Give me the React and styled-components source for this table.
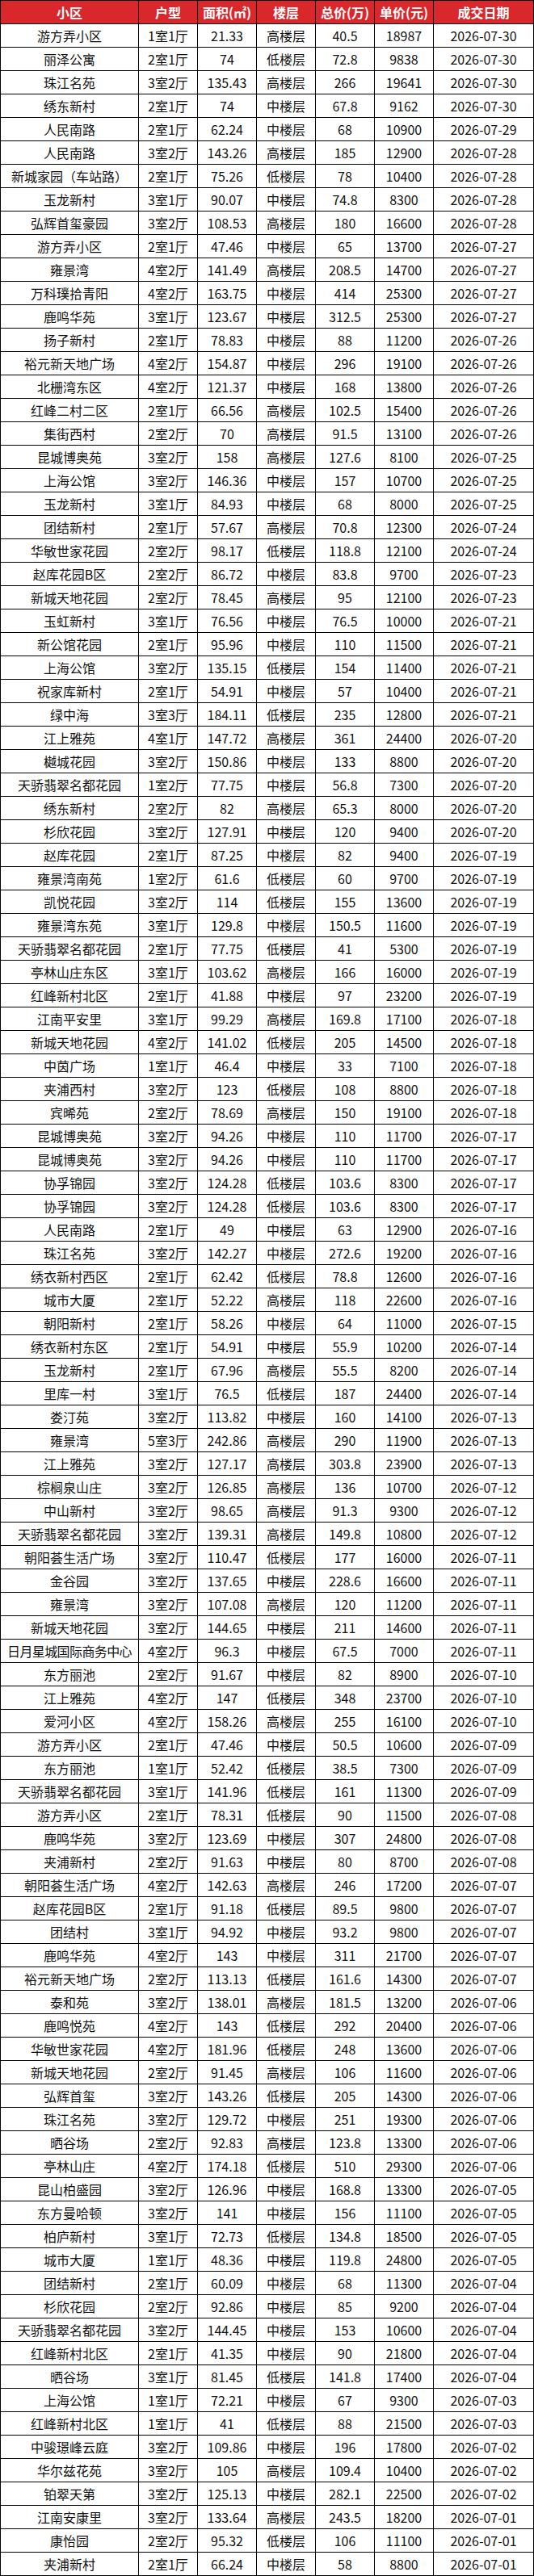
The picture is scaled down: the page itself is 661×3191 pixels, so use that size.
import React from 'react';
import styled, { createGlobalStyle } from 'styled-components';

const GlobalStyle = createGlobalStyle`
  html, body {
    margin: 0;
    padding: 0;
    background: #fff;
  }
  body {
    font-family: "Noto Sans CJK SC", "Noto Sans", "Liberation Sans", sans-serif;
  }
`;

const Table = styled.div`
  width: 661px;
  display: grid;
  grid-template-columns: 171px 73px 73px 73px 73px 73px 124px;
  grid-auto-rows: 29px;
  border-top: 1px solid #000;
  border-left: 1px solid #000;
  box-sizing: border-box;
`;

const HeadCell = styled.div`
  display: flex;
  align-items: center;
  justify-content: center;
  box-sizing: border-box;
  border-right: 1px solid #000;
  border-bottom: 1px solid #000;
  background: #d9272b;
  color: #fff;
  font-size: 16px;
  font-weight: 700;
  white-space: nowrap;
  overflow: hidden;
`;

const Cell = styled.div`
  display: flex;
  align-items: center;
  justify-content: center;
  box-sizing: border-box;
  border-right: 1px solid #000;
  border-bottom: 1px solid #000;
  color: #111;
  font-size: 16px;
  white-space: nowrap;
  overflow: hidden;
  letter-spacing: ${({ $tight }) => ($tight ? '-0.6px' : '0')};
`;

const columns = ['小区', '户型', '面积(㎡)', '楼层', '总价(万)', '单价(元)', '成交日期'];

const raw = `游方弄小区|1室1厅|21.33|高楼层|40.5|18987|2026-07-30
丽泽公寓|2室1厅|74|低楼层|72.8|9838|2026-07-30
珠江名苑|3室2厅|135.43|高楼层|266|19641|2026-07-30
绣东新村|2室1厅|74|中楼层|67.8|9162|2026-07-30
人民南路|2室1厅|62.24|中楼层|68|10900|2026-07-29
人民南路|3室2厅|143.26|高楼层|185|12900|2026-07-28
新城家园（车站路）|2室1厅|75.26|低楼层|78|10400|2026-07-28
玉龙新村|3室1厅|90.07|中楼层|74.8|8300|2026-07-28
弘辉首玺豪园|3室2厅|108.53|高楼层|180|16600|2026-07-28
游方弄小区|2室1厅|47.46|中楼层|65|13700|2026-07-27
雍景湾|4室2厅|141.49|高楼层|208.5|14700|2026-07-27
万科璞拾青阳|4室2厅|163.75|中楼层|414|25300|2026-07-27
鹿鸣华苑|3室1厅|123.67|中楼层|312.5|25300|2026-07-27
扬子新村|2室1厅|78.83|中楼层|88|11200|2026-07-26
裕元新天地广场|4室2厅|154.87|中楼层|296|19100|2026-07-26
北栅湾东区|4室2厅|121.37|中楼层|168|13800|2026-07-26
红峰二村二区|2室1厅|66.56|高楼层|102.5|15400|2026-07-26
集街西村|2室2厅|70|高楼层|91.5|13100|2026-07-26
昆城博奥苑|3室2厅|158|高楼层|127.6|8100|2026-07-25
上海公馆|3室2厅|146.36|中楼层|157|10700|2026-07-25
玉龙新村|3室1厅|84.93|中楼层|68|8000|2026-07-25
团结新村|2室1厅|57.67|高楼层|70.8|12300|2026-07-24
华敏世家花园|2室2厅|98.17|低楼层|118.8|12100|2026-07-24
赵库花园B区|2室2厅|86.72|中楼层|83.8|9700|2026-07-23
新城天地花园|2室2厅|78.45|高楼层|95|12100|2026-07-23
玉虹新村|3室1厅|76.56|中楼层|76.5|10000|2026-07-21
新公馆花园|2室1厅|95.96|中楼层|110|11500|2026-07-21
上海公馆|3室2厅|135.15|低楼层|154|11400|2026-07-21
祝家库新村|2室1厅|54.91|中楼层|57|10400|2026-07-21
绿中海|3室3厅|184.11|低楼层|235|12800|2026-07-21
江上雅苑|4室1厅|147.72|高楼层|361|24400|2026-07-20
樾城花园|3室2厅|150.86|中楼层|133|8800|2026-07-20
天骄翡翠名都花园|1室2厅|77.75|中楼层|56.8|7300|2026-07-20
绣东新村|2室2厅|82|高楼层|65.3|8000|2026-07-20
杉欣花园|3室2厅|127.91|中楼层|120|9400|2026-07-20
赵库花园|2室1厅|87.25|中楼层|82|9400|2026-07-19
雍景湾南苑|1室2厅|61.6|低楼层|60|9700|2026-07-19
凯悦花园|3室2厅|114|低楼层|155|13600|2026-07-19
雍景湾东苑|3室1厅|129.8|中楼层|150.5|11600|2026-07-19
天骄翡翠名都花园|2室1厅|77.75|低楼层|41|5300|2026-07-19
亭林山庄东区|3室1厅|103.62|高楼层|166|16000|2026-07-19
红峰新村北区|2室1厅|41.88|中楼层|97|23200|2026-07-19
江南平安里|3室1厅|99.29|高楼层|169.8|17100|2026-07-18
新城天地花园|4室2厅|141.02|低楼层|205|14500|2026-07-18
中茵广场|1室1厅|46.4|中楼层|33|7100|2026-07-18
夹浦西村|3室2厅|123|低楼层|108|8800|2026-07-18
宾晞苑|2室2厅|78.69|高楼层|150|19100|2026-07-18
昆城博奥苑|3室2厅|94.26|中楼层|110|11700|2026-07-17
昆城博奥苑|3室2厅|94.26|中楼层|110|11700|2026-07-17
协孚锦园|3室2厅|124.28|低楼层|103.6|8300|2026-07-17
协孚锦园|3室2厅|124.28|低楼层|103.6|8300|2026-07-17
人民南路|2室1厅|49|中楼层|63|12900|2026-07-16
珠江名苑|3室2厅|142.27|中楼层|272.6|19200|2026-07-16
绣衣新村西区|2室1厅|62.42|低楼层|78.8|12600|2026-07-16
城市大厦|2室1厅|52.22|高楼层|118|22600|2026-07-16
朝阳新村|2室1厅|58.26|中楼层|64|11000|2026-07-15
绣衣新村东区|2室1厅|54.91|中楼层|55.9|10200|2026-07-14
玉龙新村|2室1厅|67.96|高楼层|55.5|8200|2026-07-14
里库一村|3室1厅|76.5|低楼层|187|24400|2026-07-14
娄汀苑|3室2厅|113.82|中楼层|160|14100|2026-07-13
雍景湾|5室3厅|242.86|高楼层|290|11900|2026-07-13
江上雅苑|3室2厅|127.17|高楼层|303.8|23900|2026-07-13
棕榈泉山庄|3室2厅|126.85|高楼层|136|10700|2026-07-12
中山新村|3室2厅|98.65|高楼层|91.3|9300|2026-07-12
天骄翡翠名都花园|3室2厅|139.31|高楼层|149.8|10800|2026-07-12
朝阳荟生活广场|3室2厅|110.47|低楼层|177|16000|2026-07-11
金谷园|3室2厅|137.65|中楼层|228.6|16600|2026-07-11
雍景湾|3室2厅|107.08|高楼层|120|11200|2026-07-11
新城天地花园|3室2厅|144.65|中楼层|211|14600|2026-07-11
日月星城国际商务中心|4室2厅|96.3|中楼层|67.5|7000|2026-07-11
东方丽池|2室2厅|91.67|中楼层|82|8900|2026-07-10
江上雅苑|4室2厅|147|低楼层|348|23700|2026-07-10
爱河小区|4室2厅|158.26|高楼层|255|16100|2026-07-10
游方弄小区|2室1厅|47.46|中楼层|50.5|10600|2026-07-09
东方丽池|1室1厅|52.42|低楼层|38.5|7300|2026-07-09
天骄翡翠名都花园|3室1厅|141.96|低楼层|161|11300|2026-07-09
游方弄小区|2室1厅|78.31|低楼层|90|11500|2026-07-08
鹿鸣华苑|3室2厅|123.69|中楼层|307|24800|2026-07-08
夹浦新村|2室2厅|91.63|中楼层|80|8700|2026-07-08
朝阳荟生活广场|4室2厅|142.63|高楼层|246|17200|2026-07-07
赵库花园B区|2室1厅|91.18|低楼层|89.5|9800|2026-07-07
团结村|3室1厅|94.92|中楼层|93.2|9800|2026-07-07
鹿鸣华苑|4室2厅|143|中楼层|311|21700|2026-07-07
裕元新天地广场|2室2厅|113.13|低楼层|161.6|14300|2026-07-07
泰和苑|3室2厅|138.01|高楼层|181.5|13200|2026-07-06
鹿鸣悦苑|4室2厅|143|低楼层|292|20400|2026-07-06
华敏世家花园|4室2厅|181.96|低楼层|248|13600|2026-07-06
新城天地花园|2室2厅|91.45|高楼层|106|11600|2026-07-06
弘辉首玺|3室2厅|143.26|低楼层|205|14300|2026-07-06
珠江名苑|3室2厅|129.72|中楼层|251|19300|2026-07-06
晒谷场|2室2厅|92.83|高楼层|123.8|13300|2026-07-06
亭林山庄|4室2厅|174.18|低楼层|510|29300|2026-07-06
昆山柏盛园|3室2厅|126.96|中楼层|168.8|13300|2026-07-05
东方曼哈顿|3室2厅|141|中楼层|156|11100|2026-07-05
柏庐新村|3室1厅|72.73|低楼层|134.8|18500|2026-07-05
城市大厦|1室1厅|48.36|中楼层|119.8|24800|2026-07-05
团结新村|2室1厅|60.09|中楼层|68|11300|2026-07-04
杉欣花园|2室2厅|92.86|中楼层|85|9200|2026-07-04
天骄翡翠名都花园|3室2厅|144.45|中楼层|153|10600|2026-07-04
红峰新村北区|2室1厅|41.35|中楼层|90|21800|2026-07-04
晒谷场|3室1厅|81.45|低楼层|141.8|17400|2026-07-04
上海公馆|1室1厅|72.21|中楼层|67|9300|2026-07-03
红峰新村北区|1室1厅|41|低楼层|88|21500|2026-07-03
中骏璟峰云庭|3室2厅|109.86|中楼层|196|17800|2026-07-02
华尔兹花苑|3室2厅|105|高楼层|109.4|10400|2026-07-02
铂翠天第|3室2厅|125.13|中楼层|282.1|22500|2026-07-02
江南安康里|3室2厅|133.64|高楼层|243.5|18200|2026-07-01
康怡园|2室2厅|95.32|低楼层|106|11100|2026-07-01
夹浦新村|2室1厅|66.24|中楼层|58|8800|2026-07-01`;

const rows = raw.split('\n').map((line) => line.split('|'));

const App = () => {
  return (
    <>
      <GlobalStyle />
      <Table>
        {columns.map((col) => (
          <HeadCell key={col}>{col}</HeadCell>
        ))}
        {rows.map((row, i) =>
          row.map((value, j) => (
            <Cell key={`${i}-${j}`} $tight={j === 0 && value.length > 9}>
              {value}
            </Cell>
          ))
        )}
      </Table>
    </>
  );
};

export default App;
